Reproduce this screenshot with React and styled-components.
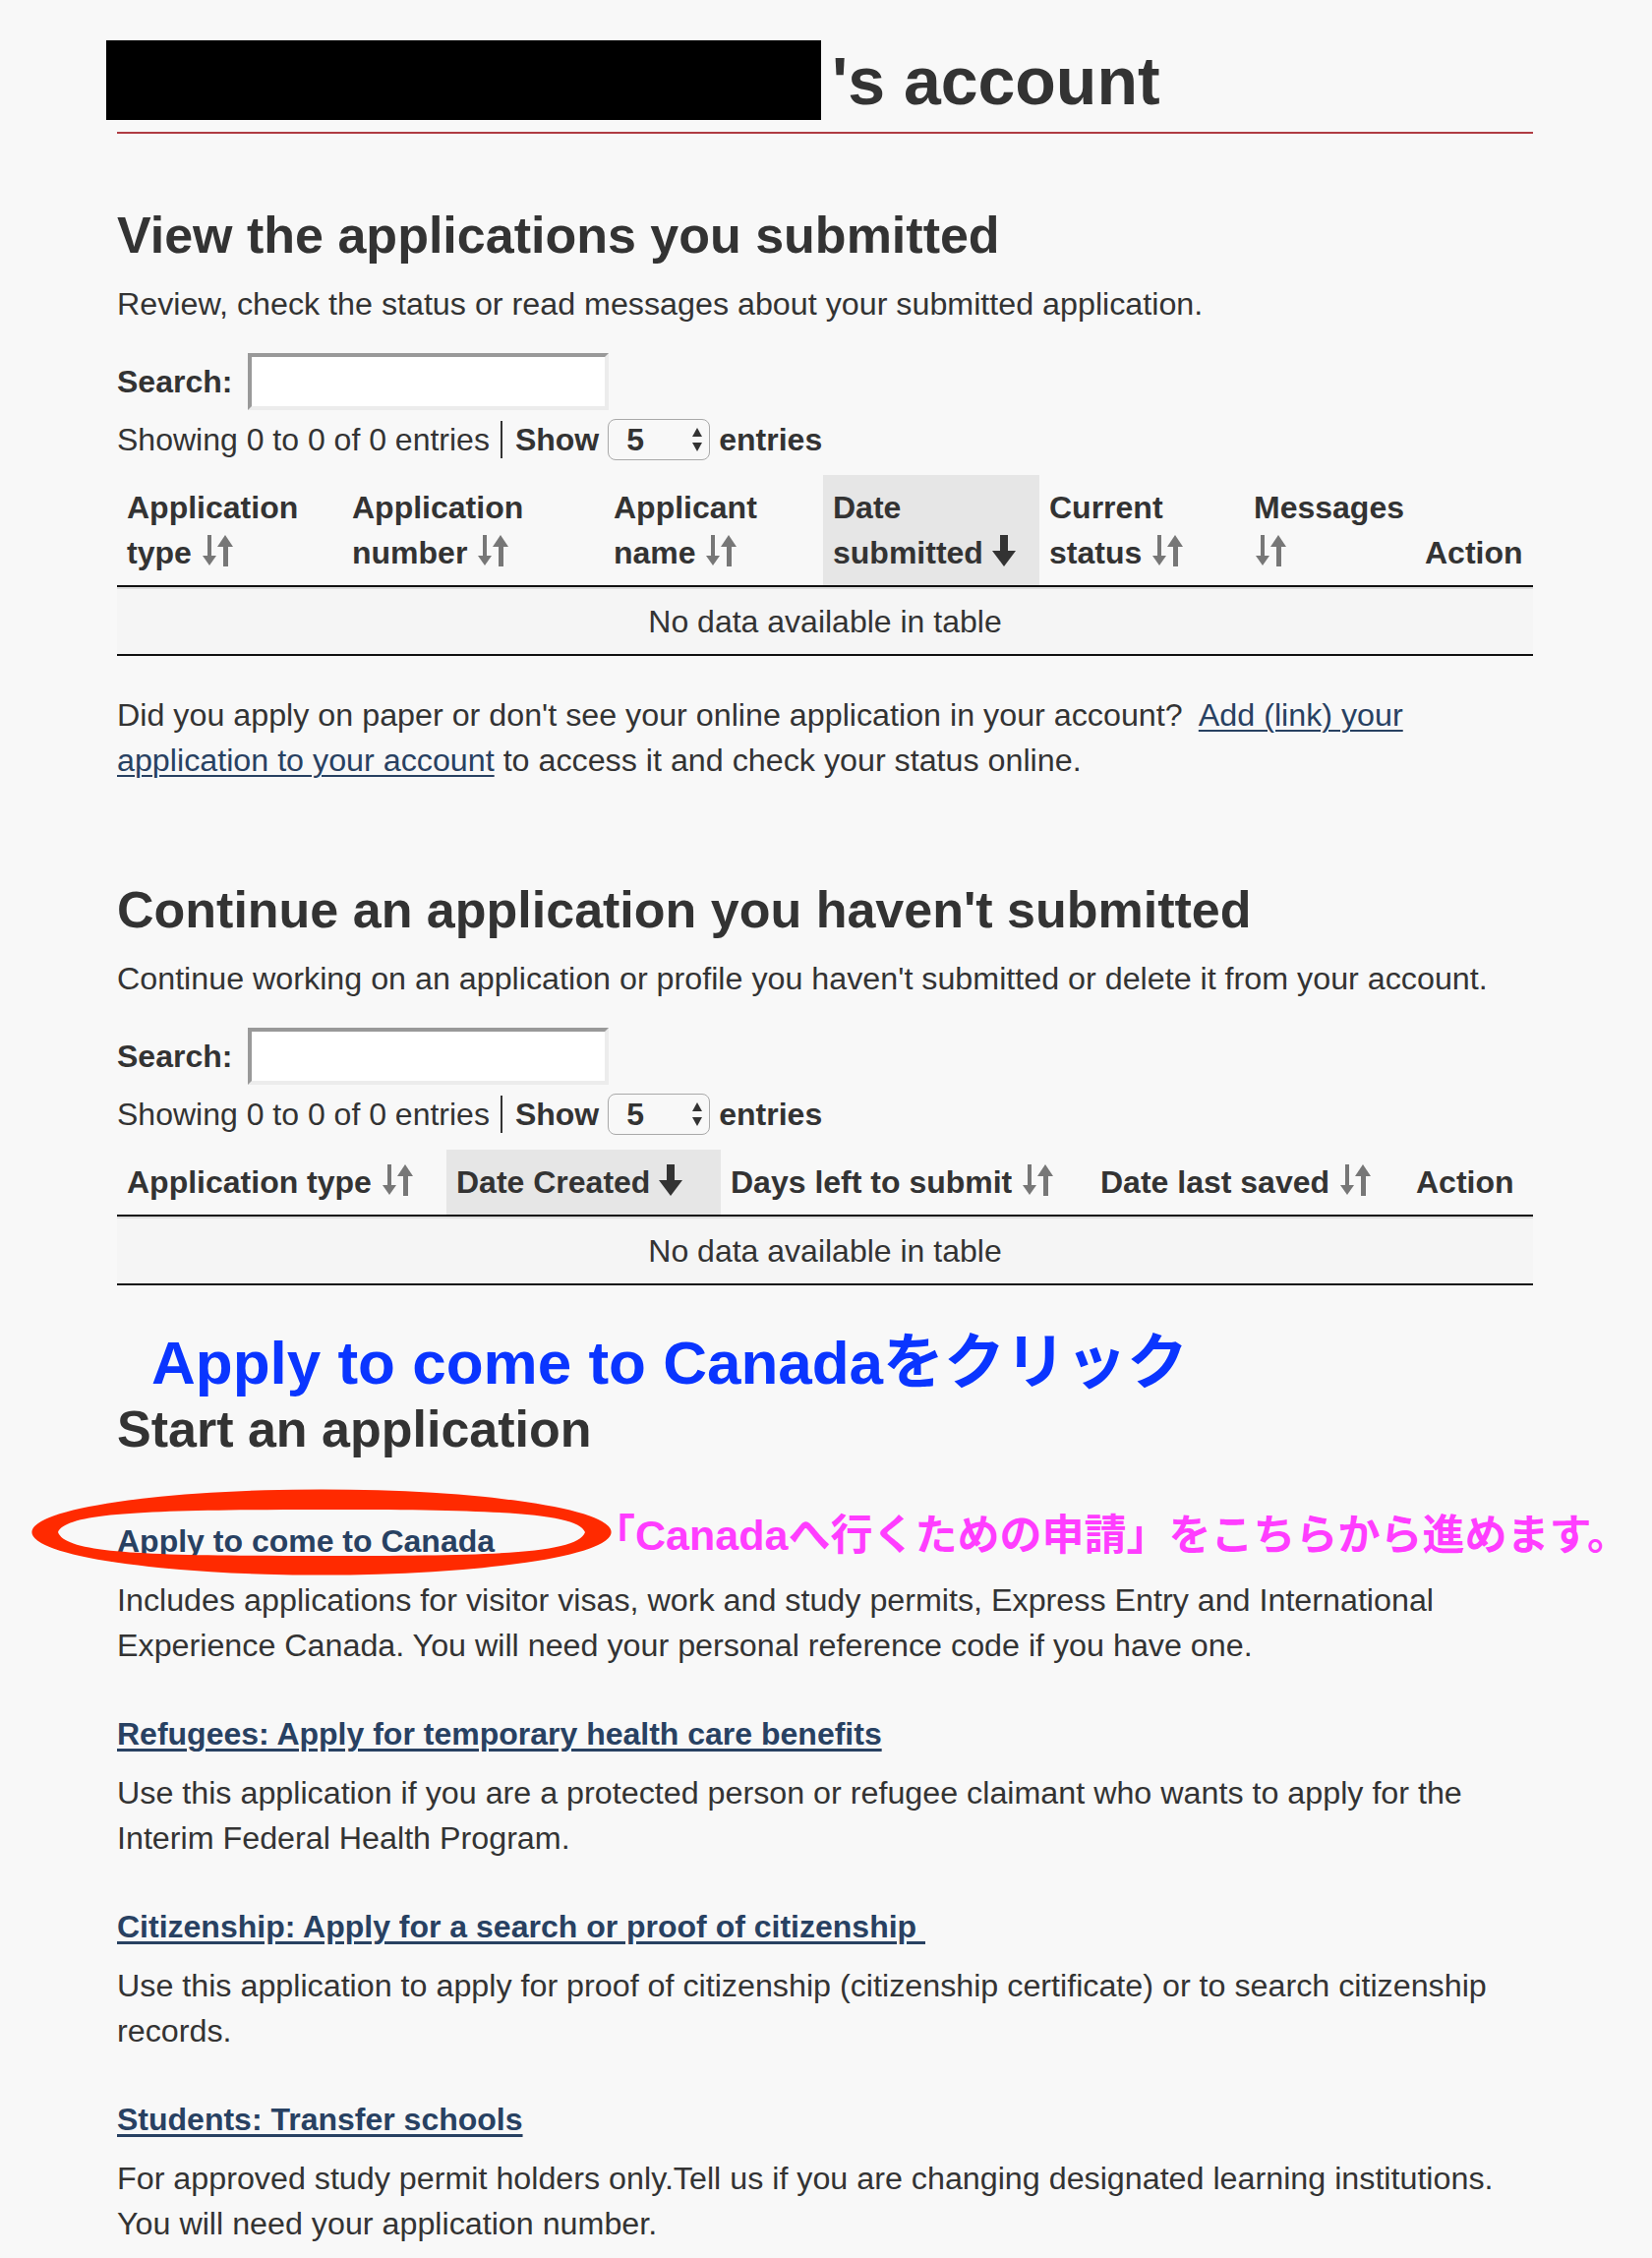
import React from "react";
import styled, { createGlobalStyle } from "styled-components";

const GlobalStyle = createGlobalStyle`
  body {
    margin: 0;
    background: #f8f8f8;
    color: #333;
    font-family: "Liberation Sans", Arial, "Noto Sans CJK JP", sans-serif;
    font-size: 32px;
    line-height: 46px;
  }
`;

const Page = styled.main`
  width: 1440px;
  padding: 0 121px 40px 119px;
`;

const TitleBar = styled.header`
  margin-top: 41px;
  padding-bottom: 12px;
  border-bottom: 2px solid #af3c43;
`;

const Title = styled.h1`
  display: flex;
  align-items: center;
  height: 81px;
  margin: 0;
  font-size: 68px;
  line-height: 80px;
  font-weight: 700;
`;

const Redacted = styled.span`
  display: block;
  width: 727px;
  height: 81px;
  margin-left: -11px;
  margin-right: 11px;
  background: #000;
`;

const H2 = styled.h2`
  margin: ${p => p.$top}px 0 0;
  font-size: 52px;
  line-height: 58px;
  font-weight: 700;
`;

const P = styled.p`
  margin: ${p => p.$top || 0}px 0 0;
  font-size: 32.25px;
`;

const SearchRow = styled.div`
  display: flex;
  align-items: center;
  margin-top: 27px;
  gap: 16px;
  font-weight: 700;
`;

const SearchInput = styled.input`
  box-sizing: border-box;
  width: 367px;
  height: 58px;
  background: #fff;
  border-style: solid;
  border-width: 4px;
  border-color: #999 #ececec #ececec #999;
  font: inherit;
  outline: none;
`;

const InfoRow = styled.div`
  display: flex;
  align-items: center;
  height: 46px;
  margin-top: 7px;
`;

const Divider = styled.span`
  width: 2px;
  height: 38px;
  background: #333;
  margin: 0 13px 0 11px;
`;

const Bold = styled.b`
  font-weight: 700;
`;

const SelectBox = styled.div`
  box-sizing: border-box;
  display: flex;
  align-items: center;
  justify-content: space-between;
  width: 104px;
  height: 42px;
  margin: 0 9px;
  padding: 0 6px 0 18px;
  border: 1px solid #a9a9a9;
  border-radius: 8px;
  font-weight: 700;
`;

const Table = styled.table`
  width: 1440px;
  margin-top: 13px;
  border-collapse: separate;
  border-spacing: 0;
  table-layout: fixed;
`;

const Th = styled.th`
  box-sizing: border-box;
  width: ${p => p.$w}px;
  padding: 10px;
  text-align: left;
  vertical-align: bottom;
  font-weight: 700;
  background: ${p => (p.$sorted ? "#e6e6e6" : "transparent")};
  border-bottom: 2px solid #111;
`;

const EmptyCell = styled.td`
  padding: 10px;
  text-align: center;
  background: #f5f5f5;
  border-top: 2px solid #ddd;
  border-bottom: 2px solid #111;
`;

const Link = styled.a`
  color: #284162;
  text-decoration: underline;
  text-decoration-thickness: ${p => (p.$bold ? "3px" : "2px")};
  text-underline-offset: 4px;
  font-weight: ${p => (p.$bold ? 700 : 400)};
`;

const SortSvg = styled.svg`
  vertical-align: -3px;
`;

const Note = styled.div`
  margin-top: 44px;
  padding-left: 35px;
  color: #0a35ff;
  font-size: 62px;
  line-height: 70px;
  font-weight: 700;
`;

const Item = styled.section`
  margin-top: ${p => p.$top}px;
`;

const LinkLine = styled.div`
  position: relative;
  height: 46px;
  white-space: nowrap;
`;

const Circle = styled.svg`
  position: absolute;
  left: -87px;
  top: -24px;
  pointer-events: none;
`;

const PinkNote = styled.span`
  margin-left: 100px;
  color: #ff3dff;
  font-size: 43px;
  font-weight: 700;
  vertical-align: 2px;
`;

const SortBoth = () => (
  <SortSvg width="34" height="32" viewBox="0 0 34 32">
    <rect x="7" y="0" width="4" height="22" fill="#777" />
    <polygon points="2,21 16,21 9,31" fill="#777" />
    <polygon points="17,12 33,12 25,0" fill="#777" />
    <rect x="23" y="11" width="5" height="21" fill="#777" />
  </SortSvg>
);

const SortDesc = () => (
  <SortSvg width="24" height="32" viewBox="0 0 24 32">
    <rect x="8" y="0" width="8" height="17" fill="#333" />
    <polygon points="0,16 24,16 12,32" fill="#333" />
  </SortSvg>
);

const Controls = () => (
  <>
    <SearchRow>
      <label>Search:</label>
      <SearchInput type="text" />
    </SearchRow>
    <InfoRow>
      <span>Showing 0 to 0 of 0 entries</span>
      <Divider />
      <Bold>Show</Bold>
      <SelectBox>
        <span>5</span>
        <svg width="12" height="28" viewBox="0 0 12 28">
          <polygon points="1,11 11,11 6,2" fill="#333" />
          <polygon points="1,17 11,17 6,26" fill="#333" />
        </svg>
      </SelectBox>
      <Bold>entries</Bold>
    </InfoRow>
  </>
);

const DataTable = ({ cols }) => (
  <Table>
    <thead>
      <tr>
        {cols.map(c => (
          <Th key={c.label} $w={c.w} $sorted={c.sort === "desc"}>
            {c.label}
            {c.sort === "both" && <> <SortBoth /></>}
            {c.sort === "desc" && <> <SortDesc /></>}
          </Th>
        ))}
      </tr>
    </thead>
    <tbody>
      <tr>
        <EmptyCell colSpan={cols.length}>No data available in table</EmptyCell>
      </tr>
    </tbody>
  </Table>
);

const submittedCols = [
  { label: "Application type", w: 229, sort: "both" },
  { label: "Application number", w: 266, sort: "both" },
  { label: "Applicant name", w: 223, sort: "both" },
  { label: "Date submitted", w: 220, sort: "desc" },
  { label: "Current status", w: 208, sort: "both" },
  { label: "Messages", w: 174, sort: "both" },
  { label: "Action", w: 120 },
];

const draftCols = [
  { label: "Application type", w: 335, sort: "both" },
  { label: "Date Created", w: 279, sort: "desc" },
  { label: "Days left to submit", w: 376, sort: "both" },
  { label: "Date last saved", w: 321, sort: "both" },
  { label: "Action", w: 129 },
];

const applyItems = [
  {
    title: "Refugees: Apply for temporary health care benefits",
    text: "Use this application if you are a protected person or refugee claimant who wants to apply for the Interim Federal Health Program.",
  },
  {
    title: "Citizenship: Apply for a search or proof of citizenship\u00a0",
    text: "Use this application to apply for proof of citizenship (citizenship certificate) or to search citizenship records.",
  },
  {
    title: "Students: Transfer schools",
    text: "For approved study permit holders only.Tell us if you are changing designated learning institutions. You will need your application number.",
  },
];

export default function App() {
  return (
    <>
      <GlobalStyle />
      <Page>
        <TitleBar>
          <Title>
            <Redacted />
            's account
          </Title>
        </TitleBar>

        <H2 $top={74}>View the applications you submitted</H2>
        <P $top={18}>Review, check the status or read messages about your submitted application.</P>
        <Controls />
        <DataTable cols={submittedCols} />
        <P $top={37}>
          Did you apply on paper or don't see your online application in your account?&nbsp;{" "}
          <Link href="#">Add (link) your application to your account</Link> to access it and check your
          status online.
        </P>

        <H2 $top={100}>Continue an application you haven't submitted</H2>
        <P $top={18}>Continue working on an application or profile you haven't submitted or delete it from your account.</P>
        <Controls />
        <DataTable cols={draftCols} />

        <Note>Apply to come to Canadaをクリック</Note>
        <H2 $top={3}>Start an application</H2>

        <Item $top={56}>
          <LinkLine>
            <Circle width="590" height="88" viewBox="0 0 590 88">
              <path
                fillRule="evenodd"
                fill="#ff2a00"
                d="M295,0.5 A294.5,43.5 0 1 1 295,87.5 A294.5,43.5 0 1 1 295,0.5 Z M27,44 C35,24 120,21 295,21 C470,21 555,24 563,44 C555,66 470,68 295,68 C120,68 35,66 27,44 Z"
              />
            </Circle>
            <Link href="#" $bold>Apply to come to Canada</Link>
            <PinkNote>「Canadaへ行くための申請」をこちらから進めます。</PinkNote>
          </LinkLine>
          <P $top={20}>
            Includes applications for visitor visas, work and study permits, Express Entry and International
            Experience Canada. You will need your personal reference code if you have one.
          </P>
        </Item>

        {applyItems.map(item => (
          <Item key={item.title} $top={44}>
            <LinkLine>
              <Link href="#" $bold>{item.title}</Link>
            </LinkLine>
            <P $top={14}>{item.text}</P>
          </Item>
        ))}
      </Page>
    </>
  );
}
